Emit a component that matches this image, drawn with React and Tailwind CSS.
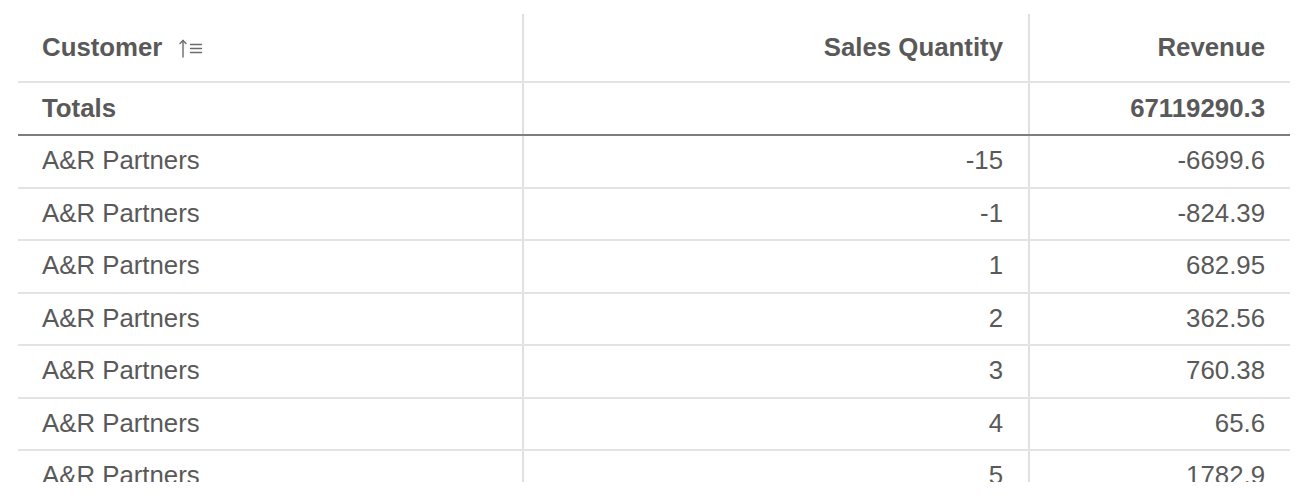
import React from 'react';

const rows = [
  { customer: 'A&R Partners', qty: '-15', revenue: '-6699.6' },
  { customer: 'A&R Partners', qty: '-1', revenue: '-824.39' },
  { customer: 'A&R Partners', qty: '1', revenue: '682.95' },
  { customer: 'A&R Partners', qty: '2', revenue: '362.56' },
  { customer: 'A&R Partners', qty: '3', revenue: '760.38' },
  { customer: 'A&R Partners', qty: '4', revenue: '65.6' },
  { customer: 'A&R Partners', qty: '5', revenue: '1782.9' },
];

const SortIcon = () => (
  <svg width="24" height="20" viewBox="0 0 24 20" fill="none" stroke="#6b6b6b" strokeWidth="1.4" strokeLinecap="round">
    <path d="M4 2.5V19" />
    <path d="M1 5.5L4 2.5L7 5.5" />
    <path d="M11.5 6.5H22.5" />
    <path d="M11.5 10.5H22.5" />
    <path d="M11.5 14.5H22.5" />
  </svg>
);

const cellL = 'flex items-center px-6 border-r-2 border-[#e0e0e0]';
const cellM = 'flex items-center justify-end px-[25px] border-r-2 border-[#e0e0e0]';
const cellR = 'flex items-center justify-end px-[25px]';

const App = () => {
  return (
    <div className="bg-white w-[1312px] h-[498px] pl-[18px] pr-[22px] pt-[14px]">
      <div
        className="h-[468px] overflow-hidden text-[#595959] text-[25.8px] leading-none"
        style={{ fontFamily: '"Liberation Sans", Arial, sans-serif' }}
      >
        {/* header */}
        <div className="grid grid-cols-[506px_506px_260px] h-[69px] border-b-2 border-[#e3e3e3] font-bold">
          <div className={cellL}>
            <span>Customer</span>
            <span className="ml-[17px] mt-[1px]"><SortIcon /></span>
          </div>
          <div className={cellM}>Sales Quantity</div>
          <div className={cellR}>Revenue</div>
        </div>

        {/* totals */}
        <div className="grid grid-cols-[506px_506px_260px] h-[53px] border-b-2 border-[#7d7d7d] font-bold">
          <div className={cellL}>Totals</div>
          <div className={cellM}></div>
          <div className={cellR}>67119290.3</div>
        </div>

        {rows.map((r, i) => (
          <div key={i} className="grid grid-cols-[506px_506px_260px] h-[52.5px] border-b-2 border-[#e3e3e3]">
            <div className={cellL}>{r.customer}</div>
            <div className={cellM}>{r.qty}</div>
            <div className={cellR}>{r.revenue}</div>
          </div>
        ))}
      </div>
    </div>
  );
};

export default App;
